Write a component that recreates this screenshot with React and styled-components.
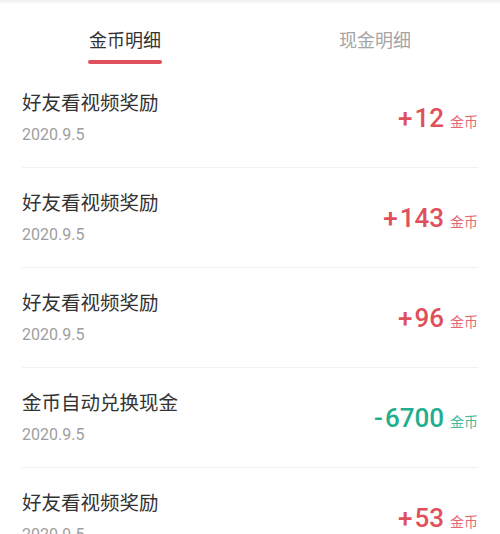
import styled, { createGlobalStyle } from "styled-components";

/* Estilos globais da página */

const GlobalStyle = createGlobalStyle`
    html, body {
        margin: 0;
        padding: 0;
        background: #ffffff;
    }
    body {
        font-family: Roboto, "Noto Sans CJK SC", sans-serif;
        overflow: hidden;
    }
`;

const SPage = styled.div`
    width: 500px;
    height: 534px;
    overflow: hidden;
    background: linear-gradient(#ececec 0px, #ffffff 4px);
`;

/* Cabeçalho com as abas */

const SHeader = styled.div`
    display: grid;
    grid-template-columns: 1fr 1fr;
    height: 68px;
`;

const STab = styled.div`
    display: flex;
    flex-direction: column;
    align-items: center;
    padding-top: 29px;

    span {
        font-size: 18px;
        line-height: 24px;
        color: ${({ $active }) => ($active ? "#333333" : "#a5a5a5")};
    }
`;

const SIndicator = styled.div`
    width: 74px;
    height: 4px;
    margin-top: 7px;
    border-radius: 2px;
    background: ${({ $active }) => ($active ? "#e0505c" : "transparent")};
`;

/* Lista de registros */

const SUl = styled.ul`
    list-style-type: none;
    margin: 0;
    padding: 0;
`;

const SLi = styled.li`
    margin: 0 22px;
    height: 99px;
    border-bottom: 1px solid #f1f1f1;
    display: flex;
    justify-content: space-between;
    align-items: center;
`;

const SDivInfo = styled.div`
    p {
        margin: 0;
        font-size: 19.5px;
        line-height: 26px;
        color: #333333;
    }
    span {
        display: block;
        margin-top: 8px;
        font-size: 16px;
        line-height: 20px;
        color: #9e9e9e;
    }
`;

const SAmount = styled.div`
    display: flex;
    align-items: baseline;
    color: ${({ $negative }) => ($negative ? "#1fae8e" : "#e0505c")};

    strong {
        font-size: 26px;
        font-weight: 500;
        line-height: 30px;
    }
    i {
        font-style: normal;
        margin-right: 2px;
    }
    small {
        margin-left: 6px;
        font-size: 14px;
        opacity: 0.85;
    }
`;

const records = [
    { id: 1, title: "好友看视频奖励", date: "2020.9.5", value: 12 },
    { id: 2, title: "好友看视频奖励", date: "2020.9.5", value: 143 },
    { id: 3, title: "好友看视频奖励", date: "2020.9.5", value: 96 },
    { id: 4, title: "金币自动兑换现金", date: "2020.9.5", value: -6700 },
    { id: 5, title: "好友看视频奖励", date: "2020.9.5", value: 53 },
];

function Record({ record }) {
    const negative = record.value < 0;
    return (
        <SLi>
            <SDivInfo>
                <p>{record.title}</p>
                <span>{record.date}</span>
            </SDivInfo>
            <SAmount $negative={negative}>
                <strong>
                    <i>{negative ? "-" : "+"}</i>
                    {Math.abs(record.value)}
                </strong>
                <small>金币</small>
            </SAmount>
        </SLi>
    );
}

function App() {
    return (
        <SPage>
            <GlobalStyle />
            <SHeader>
                <STab $active>
                    <span>金币明细</span>
                    <SIndicator $active />
                </STab>
                <STab>
                    <span>现金明细</span>
                    <SIndicator />
                </STab>
            </SHeader>
            <SUl>
                {records.map((record) => (
                    <Record key={record.id} record={record} />
                ))}
            </SUl>
        </SPage>
    );
}

export default App;
